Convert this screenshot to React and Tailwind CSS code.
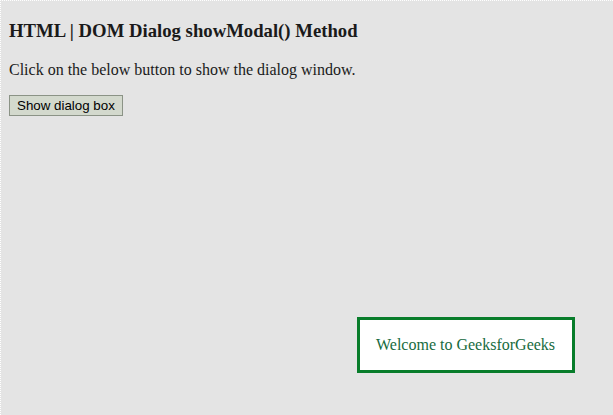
export default function App() {
  return (
    <div className="relative h-[415px] w-[613px] overflow-hidden border-l border-t border-dotted border-white bg-[#e4e4e4] px-2 font-['Liberation_Serif',serif] text-[#1a1a1a]">
      <h3 className="mt-[19px] text-[18.72px] font-bold leading-[21.5px]">
        HTML | DOM Dialog showModal() Method
      </h3>
      <p className="mt-[19.5px] text-base leading-[18.4px]">
        Click on the below button to show the dialog window.
      </p>
      <button className="mt-[16px] h-[21px] border border-[#8b9386] bg-[#d3d9cd] px-[7px] font-['Liberation_Sans',sans-serif] text-[13.33px] leading-none text-black">
        Show dialog box
      </button>

      {/* dialog */}
      <div className="absolute left-[356px] top-[316px] w-[218px] border-[3px] border-[#087d2b] bg-white px-4 py-4 font-['Liberation_Serif',serif] text-base leading-[18px] text-[#176b3e]">
        Welcome to GeeksforGeeks
      </div>
    </div>
  );
}
